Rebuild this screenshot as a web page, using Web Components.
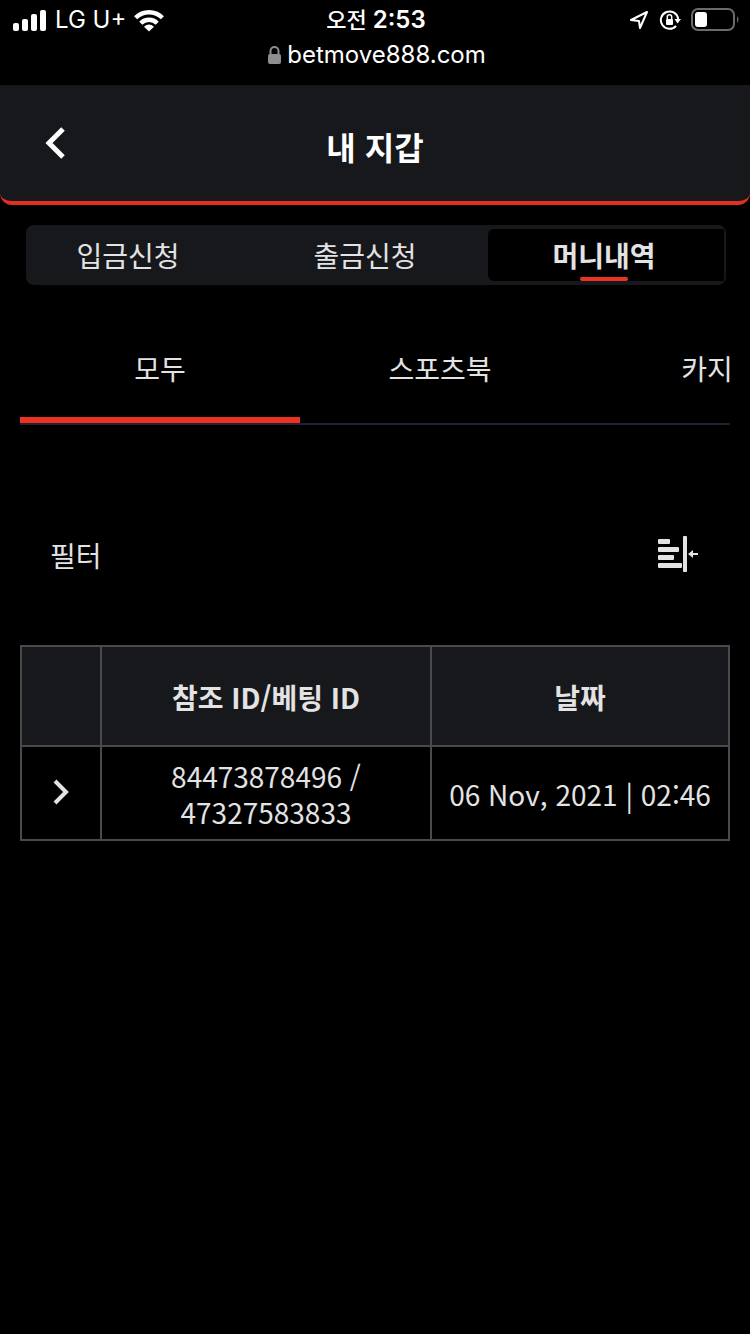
<!DOCTYPE html>
<html lang="ko">
<head>
<meta charset="utf-8">
<meta name="viewport" content="width=device-width, initial-scale=1">
<title>내 지갑</title>
<style>
    :root {
        --primary-color: #e13022;
        --accent-color: #ea3323;
        --panel-color: #17181c;
        --text-color: #e3e3e3;
        --table-border: #4a4a4e;
    }
    body {
        margin: 0;
        background: #000;
        color: var(--text-color);
        font-family: "Noto Sans CJK KR", sans-serif;
        font-size: 28px;
        line-height: 36px;
    }
</style>
</head>
<body>
<wallet-status carrier="LG U+" period="오전" time="2:53" host="betmove888.com"></wallet-status>
<wallet-header>내 지갑</wallet-header>
<wallet-segments>
    <wallet-segment>입금신청</wallet-segment>
    <wallet-segment>출금신청</wallet-segment>
    <wallet-segment active>머니내역</wallet-segment>
</wallet-segments>
<wallet-tabs>
    <wallet-tab active>모두</wallet-tab>
    <wallet-tab>스포츠북</wallet-tab>
    <wallet-tab>카지노</wallet-tab>
</wallet-tabs>
<wallet-filter>필터</wallet-filter>
<wallet-history></wallet-history>

<script>
class WalletElement extends HTMLElement {

    constructor() {
        super();
        const template = document.createElement("template");
        template.innerHTML = this.constructor.markup;
        this.attachShadow({ mode: "open" });
        this.shadowRoot.appendChild(template.content.cloneNode(true));
    }

    $(selector) {
        return this.shadowRoot.querySelector(selector);
    }
}

class Status extends WalletElement {

    static get markup() {
        return `<style>:host {
            display: block;
            height: 85px;
            color: #fff;
            font-family: Inter, "Noto Sans CJK KR", sans-serif;
            font-size: 24px;
            line-height: 40px;
        }
        .bar { display: grid; grid-template-columns: 1fr auto 1fr; align-items: center; height: 40px; padding: 0 11px 0 13px; }
        .left, .right, .address, .clock { display: flex; align-items: center; }
        .left { gap: 8px; }
        .right { justify-content: flex-end; gap: 10px; }
        .clock { gap: 6px; font-weight: 600; }
        .period { font-size: 22px; font-weight: 500; }
        .address { justify-content: center; gap: 6px; padding-left: 4px; line-height: 30px; }
        svg { display: block; flex: none; }
        </style><div class="bar">
            <div class="left">
                <svg width="34" height="22" viewBox="0 0 34 22" fill="#fff">
                    <rect y="14" width="6" height="8" rx="2"/><rect x="9" y="10" width="6" height="12" rx="2"/>
                    <rect x="18" y="5" width="6" height="17" rx="2"/><rect x="27" y="1" width="6" height="21" rx="2"/>
                </svg>
                <span class="carrier"></span>
                <svg width="30" height="24" viewBox="0 0 30 24" fill="none" stroke="#fff">
                    <path d="M1.600 9.800a19 19 0 0 1 26.800 0" stroke-width="4.400"/>
                    <path d="M6.800 15.200a11.600 11.600 0 0 1 16.400 0" stroke-width="4.400"/>
                    <path d="M15 23.500l-5-4.800q5-4.400 10 0z" fill="#fff" stroke="none"/>
                </svg>
            </div>
            <div class="clock"><span class="period"></span><span class="time"></span></div>
            <div class="right">
                <svg width="20" height="20" viewBox="0 0 20 20" fill="none" stroke="#fff" stroke-width="2" stroke-linejoin="round">
                    <path d="M18 2L2 10l8 1 1 7z"/>
                </svg>
                <svg width="22" height="22" viewBox="0 0 22 22" fill="none" stroke="#fff" stroke-width="2">
                    <path d="M17 17A8.700 8.700 0 1 1 19.200 10"/>
                    <path d="M15.500 10h6.500l-3.500 4.500z" fill="#fff" stroke="none"/>
                    <rect x="7" y="10" width="7" height="6" rx="1" fill="#fff" stroke="none"/>
                    <path d="M8.300 10V8a2.200 2.200 0 0 1 4.400 0v2" stroke-width="1.500"/>
                </svg>
                <svg width="48" height="24" viewBox="0 0 48 24">
                    <rect x="1" y="1" width="42" height="21" rx="6" fill="none" stroke="#6b6b6b" stroke-width="2"/>
                    <rect x="4" y="4" width="12" height="15" rx="3" fill="#fff"/>
                    <path d="M46 8q3 3.500 0 7z" fill="#6b6b6b"/>
                </svg>
            </div>
        </div>
        <div class="address">
            <svg width="13" height="18" viewBox="0 0 13 18" fill="none" stroke="#8e8d92" stroke-width="2">
                <rect y="8" width="13" height="10" rx="2" fill="#8e8d92" stroke="none"/>
                <path d="M2.500 9V5a4 4 0 0 1 8 0v4"/>
            </svg>
            <span class="host"></span>
        </div>`;
    }

    connectedCallback() {
        for (const name of ["carrier", "period", "time", "host"]) {
            this.$("." + name).textContent = this.getAttribute(name);
        }
    }
}

class Header extends WalletElement {

    static get markup() {
        return `<style>:host {
            display: grid;
            grid-template-columns: 80px 1fr 80px;
            align-items: center;
            height: 116px;
            background: var(--panel-color);
            border-bottom: 4px solid var(--primary-color);
            border-radius: 0 0 12px 12px;
            color: #fff;
        }
        h1 { margin: 0; padding-top: 6px; text-align: center; font-size: 32px; line-height: 40px; font-weight: 700; }
        button { display: flex; justify-content: flex-end; padding: 0 14px 0 0; border: 0; background: none; }
        </style><button type="button" aria-label="뒤로">
            <svg width="22" height="34" viewBox="0 0 22 34" fill="none" stroke="#fff" stroke-width="5"><path d="M19 3L5 17l14 14"/></svg>
        </button>
        <h1><slot></slot></h1>`;
    }
}

class Segments extends WalletElement {

    static get markup() {
        return `<style>:host {
            display: grid;
            grid-template-columns: 204fr 258fr 236fr;
            margin: 20px 24px 0 26px;
            padding: 4px 2px 4px 0;
            background: var(--panel-color);
            border-radius: 8px;
        }
        ::slotted(:nth-child(2)) { padding-left: 12px; }
        </style><slot></slot>`;
    }
}

class Segment extends WalletElement {

    static get markup() {
        return `<style>:host { display: block; }
        button {
            display: block;
            position: relative;
            width: 100%;
            height: 52px;
            padding: 0;
            border: 0;
            background: none;
            color: inherit;
            font: inherit;
        }
        :host([active]) button { padding-right: 4px; background: #000; border-radius: 6px 0 0 6px; font-weight: 700; }
        :host([active]) span::after {
            content: "";
            position: absolute;
            bottom: 0;
            left: calc(50% - 26px);
            width: 48px;
            height: 4px;
            border-radius: 2px;
            background: var(--accent-color);
        }
        </style><button type="button"><span><slot></slot></span></button>`;
    }
}

class Tabs extends WalletElement {

    static get markup() {
        return `<style>:host {
            display: flex;
            margin: 28px 20px 0;
            border-bottom: 2px solid #20222d;
            overflow: hidden;
        }
        </style><slot></slot>`;
    }
}

class Tab extends WalletElement {

    static get markup() {
        return `<style>:host { display: block; flex: 0 0 280px; }
        button {
            display: block;
            width: 100%;
            height: 110px;
            padding: 6px 0 0;
            border: 0;
            border-bottom: 6px solid transparent;
            background: none;
            color: inherit;
            font: inherit;
        }
        :host([active]) button { border-color: var(--accent-color); }
        </style><button type="button"><slot></slot></button>`;
    }
}

class Filter extends WalletElement {

    static get markup() {
        return `<style>:host {
            display: flex;
            justify-content: space-between;
            align-items: center;
            margin: 110px 50px 0;
        }
        button { padding: 0; border: 0; background: none; }
        svg { display: block; }
        </style><span><slot></slot></span>
        <button type="button" aria-label="필터">
            <svg width="42" height="40" viewBox="0 0 42 40" fill="#e3e3e3">
                <rect y="4" width="12" height="5" rx="1"/><rect y="12" width="21" height="5" rx="1"/>
                <rect y="20" width="16" height="5" rx="1"/><rect y="28" width="24" height="5" rx="1"/>
                <rect x="25" y="1" width="4" height="36" rx="1"/>
                <path d="M30 19l5-4v3h5v2h-5v3z"/>
            </svg>
        </button>`;
    }
}

class History extends WalletElement {

    static get markup() {
        return `<style>:host { display: block; margin: 70px 20px 0; }
        table { width: 100%; table-layout: fixed; border-collapse: collapse; text-align: center; }
        .toggle { width: 80px; }
        .date { width: 298px; }
        th, td { padding: 11px 16px 9px; border: 2px solid var(--table-border); }
        th { height: 78px; background: var(--panel-color); font-weight: 700; }
        td { height: 72px; }
        td:first-child { padding: 0; }
        td:nth-child(2) { padding: 11px 64px 9px; }
        button { padding: 0; border: 0; background: none; }
        svg { display: block; }
        </style><table>
            <colgroup><col class="toggle"><col><col class="date"></colgroup>
            <thead><tr><th></th><th>참조 ID/베팅 ID</th><th>날짜</th></tr></thead>
            <tbody><tr>
                <td><button type="button" aria-label="자세히"><svg width="18" height="26" viewBox="0 0 18 26" fill="none" stroke="#e3e3e3" stroke-width="4"><path d="M3 2l11 11L3 24"/></svg></button></td>
                <td>84473878496 / 47327583833</td>
                <td>06 Nov, 2021 | 02:46</td>
            </tr></tbody>
        </table>`;
    }
}

customElements.define("wallet-status", Status);
customElements.define("wallet-header", Header);
customElements.define("wallet-segments", Segments);
customElements.define("wallet-segment", Segment);
customElements.define("wallet-tabs", Tabs);
customElements.define("wallet-tab", Tab);
customElements.define("wallet-filter", Filter);
customElements.define("wallet-history", History);
</script>
</body>
</html>
